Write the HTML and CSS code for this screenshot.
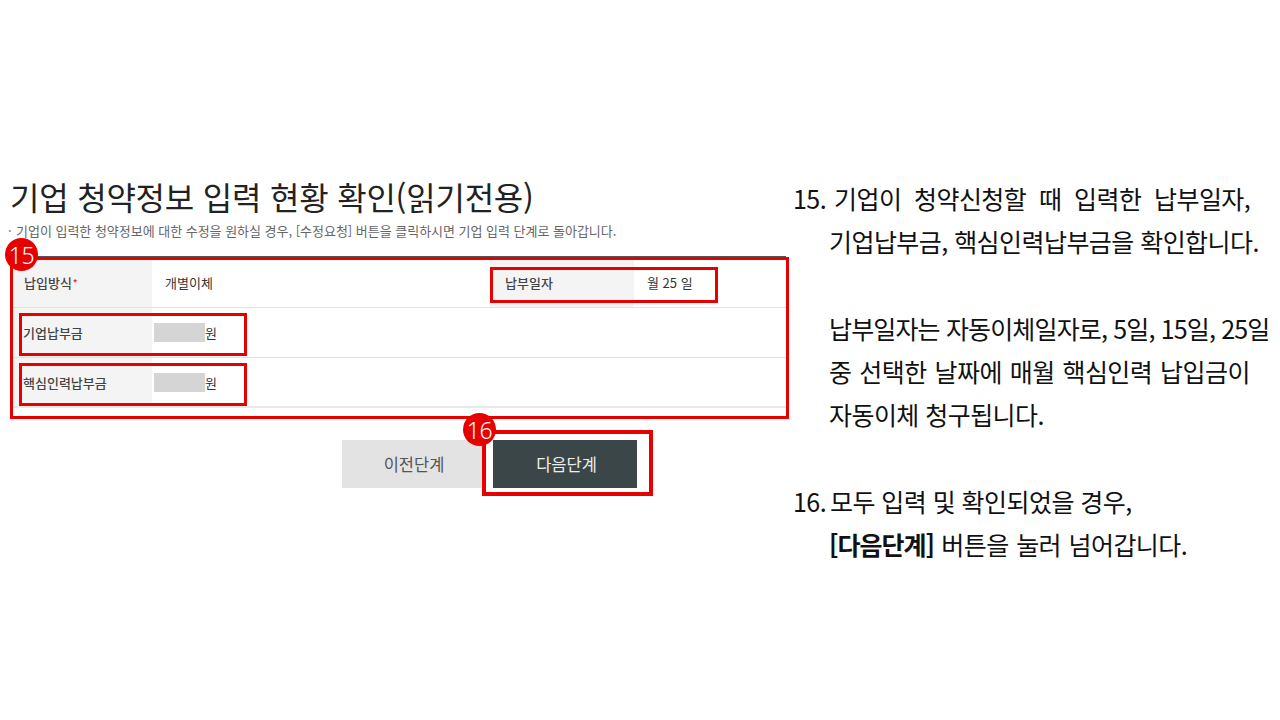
FILE: index.html
```html
<!DOCTYPE html>
<html lang="ko">
<head>
<meta charset="utf-8">
<title>기업 청약정보 입력 현황 확인</title>
<link rel="stylesheet" href="styles.css">
</head>
<body>
<main class="slide">
  <section class="left">
    <h1 class="title">기업 청약정보 입력 현황 확인(읽기전용)</h1>
    <p class="note"><span class="dot">·</span>기업이 입력한 청약정보에 대한 수정을 원하실 경우, [수정요청] 버튼을 클릭하시면 기업 입력 단계로 돌아갑니다.</p>
    <div class="table-wrap">
      <div class="table">
        <div class="row row-first">
          <div class="label">납입방식<span class="req">*</span></div>
          <div class="value value-wide">개별이체</div>
          <div class="label label-second">납부일자</div>
          <div class="value">월 25 일</div>
        </div>
        <div class="row row-mid">
          <div class="label label-tight">기업납부금</div>
          <div class="value value-amount"><span class="mask"></span>원</div>
        </div>
        <div class="row row-last">
          <div class="label label-tight">핵심인력납부금</div>
          <div class="value value-amount"><span class="mask"></span>원</div>
        </div>
      </div>
      <span class="hl hl-table"></span>
      <span class="hl hl-date"></span>
      <span class="hl hl-pay1"></span>
      <span class="hl hl-pay2"></span>
      <span class="badge badge-15">15</span>
    </div>
    <div class="actions">
      <button class="btn btn-prev" type="button">이전단계</button>
      <button class="btn btn-next" type="button">다음단계</button>
      <span class="hl hl-next"></span>
      <span class="badge badge-16">16</span>
    </div>
  </section>
  <section class="right">
    <p class="item"><span class="num">15.</span><span class="wide">기업이 청약신청할 때 입력한 납부일자,</span></p>
    <p class="cont">기업납부금, 핵심인력납부금을 확인합니다.</p>
    <p class="cont blank">&nbsp;</p>
    <p class="cont tight">납부일자는 자동이체일자로, 5일, 15일, 25일</p>
    <p class="cont roomy">중 선택한 날짜에 매월 핵심인력 납입금이</p>
    <p class="cont">자동이체 청구됩니다.</p>
    <p class="cont blank">&nbsp;</p>
    <p class="item"><span class="num num-tight">16.</span><span>모두 입력 및 확인되었을 경우,</span></p>
    <p class="cont last"><strong>[다음단계]</strong> 버튼을 눌러 넘어갑니다.</p>
  </section>
</main>
</body>
</html>
```
FILE: styles.css
```css
* { box-sizing: border-box; }
html, body { margin: 0; padding: 0; background: #fff; }
body { font-family: "Noto Sans CJK KR", "Noto Sans", sans-serif; }
.slide { width: 1280px; height: 720px; display: flex; overflow: hidden; background: #fff; }

.left { width: 793px; padding: 173px 0 0 10px; flex: none; }
.title { margin: 0; font-size: 32px; line-height: 46px; font-weight: 400; color: #222; letter-spacing: -0.22px; white-space: nowrap; }
.note { margin: 2px 0 0; font-size: 13px; line-height: 20px; color: #666; letter-spacing: -0.02px; white-space: nowrap; }
.dot { display: inline-block; width: 8px; margin-left: -2px; }

.table-wrap { position: relative; margin-top: 11px; width: 778px; height: 162px; padding: 4px 0 0 2px; }
.table { border-top: 1px solid #555; width: 774px; }
.row { display: flex; border-bottom: 1px solid #e2e2e2; }
.row-first { height: 51px; }
.row-mid { height: 50px; }
.row-last { height: 50px; border-bottom: 2px solid #e8e8e8; }
.label { width: 140px; flex: none; background: #f4f4f4; display: flex; align-items: center; padding-left: 12px; font-size: 13px; font-weight: 500; color: #444; letter-spacing: 0; }
.label-tight { padding-left: 11px; }
.label-second { width: 144px; padding-left: 15px; }
.req { color: #d22; margin-left: 1px; font-size: 10px; }
.value { display: flex; align-items: center; padding-left: 13px; font-size: 13px; font-weight: 400; color: #333; white-space: nowrap; }
.value-wide { width: 338px; }
.value-amount { padding-left: 2px; }
.mask { display: inline-block; width: 51px; height: 19px; background: #d5d5d5; }

.actions { position: relative; display: flex; margin: 26px 0 0 332px; width: 300px; height: 48px; }
.btn { width: 144px; height: 48px; border: 0; padding: 0; font-family: inherit; font-size: 16.5px; }
.btn-prev { background: #e3e3e3; color: #555; }
.btn-next { background: #3b4648; color: #eee; margin-left: 7px; padding-left: 3px; }

.hl { position: absolute; border: 3px solid #e60000; display: block; pointer-events: none; }
.hl-table { left: 0; top: 5px; width: 779px; height: 162px; }
.hl-date { left: 480px; top: 15px; width: 228px; height: 36px; }
.hl-pay1 { left: 9px; top: 61px; width: 228px; height: 43px; }
.hl-pay2 { left: 9px; top: 111px; width: 228px; height: 43px; }
.hl-next { left: 140px; top: -10px; width: 171px; height: 66px; border-width: 4px; }

.badge { position: absolute; width: 33px; height: 33px; border-radius: 50%; background: #e60000; color: #fff; display: flex; align-items: center; justify-content: center; font-family: "Noto Sans", sans-serif; font-weight: 300; font-size: 23px; letter-spacing: -0.5px; }
.badge-15 { left: -5px; top: -14px; }
.badge-16 { left: 121px; top: -27px; }

.right { flex: 1; padding-top: 177px; font-size: 25px; line-height: 43.25px; color: #111; letter-spacing: -0.55px; white-space: nowrap; }
.right p { margin: 0; }
.item { display: flex; }
.num { width: 41px; flex: none; }
.num-tight { width: 37px; }
.wide { word-spacing: 6.2px; }
.cont { padding-left: 36px; }
.right .tight { letter-spacing: -0.85px; }
.right .roomy { word-spacing: 1.4px; }
.right .last { word-spacing: 1px; }
.right strong { font-weight: 700; letter-spacing: -1px; }
```
